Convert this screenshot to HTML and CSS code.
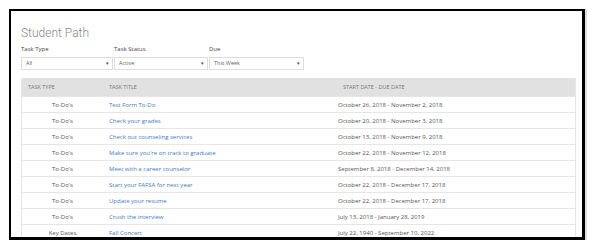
FILE: index.html
```html
<!DOCTYPE html>
<html lang="en">
  <head>
    <meta charset="UTF-8" />
    <title>Student Path</title>
    <link rel="stylesheet" href="styles.css">
  </head>
  <body>
    <!-- screenshot frame -->
    <div class="frame">
      <h1 class="title">Student Path</h1>

      <!-- filters -->
      <div class="filters">
        <div class="filter f1">
          <label>Task Type</label>
          <div class="select">All<span class="caret">&#9662;</span></div>
        </div>
        <div class="filter f2">
          <label>Task Status</label>
          <div class="select">Active<span class="caret">&#9662;</span></div>
        </div>
        <div class="filter f3">
          <label>Due</label>
          <div class="select">This Week<span class="caret">&#9662;</span></div>
        </div>
      </div>

      <!-- task list -->
      <table class="tasks">
        <thead>
          <tr>
            <th class="c-type">Task Type</th>
            <th class="c-title">Task Title</th>
            <th class="c-date">Start Date - Due Date</th>
          </tr>
        </thead>
        <tbody>
          <tr><td class="c-type">To-Do's</td><td class="c-title"><a href="#">Test Form To-Do</a></td><td class="c-date">October 26, 2018 - November 2, 2018</td></tr>
          <tr><td class="c-type">To-Do's</td><td class="c-title"><a href="#">Check your grades</a></td><td class="c-date">October 20, 2018 - November 3, 2018</td></tr>
          <tr><td class="c-type">To-Do's</td><td class="c-title"><a href="#">Check out counseling services</a></td><td class="c-date">October 13, 2018 - November 9, 2018</td></tr>
          <tr><td class="c-type">To-Do's</td><td class="c-title"><a href="#">Make sure you're on track to graduate</a></td><td class="c-date">October 22, 2018 - November 12, 2018</td></tr>
          <tr><td class="c-type">To-Do's</td><td class="c-title"><a href="#">Meet with a career counselor</a></td><td class="c-date">September 8, 2018 - December 14, 2018</td></tr>
          <tr><td class="c-type">To-Do's</td><td class="c-title"><a href="#">Start your FAFSA for next year</a></td><td class="c-date">October 22, 2018 - December 17, 2018</td></tr>
          <tr><td class="c-type">To-Do's</td><td class="c-title"><a href="#">Update your resume</a></td><td class="c-date">October 22, 2018 - December 17, 2018</td></tr>
          <tr><td class="c-type">To-Do's</td><td class="c-title"><a href="#">Crush the interview</a></td><td class="c-date">July 13, 2018 - January 28, 2019</td></tr>
          <tr><td class="c-type">Key Dates</td><td class="c-title"><a href="#">Fall Concert</a></td><td class="c-date">July 22, 1940 - September 10, 2022</td></tr>
        </tbody>
      </table>
    </div>
  </body>
</html>
```

FILE: styles.css
```css
body {
  margin: 0;
  padding: 0;
  background: #fff;
  font-family: "Open Sans", "Liberation Sans", sans-serif;
  color: #555;
}

/* black frame around the captured page */
.frame {
  margin: 9px 0 0 9px;
  width: 555px;
  height: 226px;
  padding: 0 6px 0 10px;
  border: 2px solid #000;
  border-right-width: 3px;
  border-bottom-width: 3px;
  box-shadow: 2px 0 0 #ddd;
  overflow: hidden;
}

.title {
  margin: 15px 0 0;
  font-family: Roboto, "Liberation Sans", sans-serif;
  font-weight: 300;
  font-size: 12px;
  line-height: 15px;
  color: #888;
}

/* filters */
.filters {
  display: flex;
  margin-top: 4px;
}

.filter label {
  display: block;
  font-size: 6px;
  line-height: 9px;
  color: #444;
  margin-bottom: 3px;
}

.f1 { width: 93px; }
.f2 { width: 95px; }
.f3 { width: 95px; }

.select {
  position: relative;
  height: 11px;
  line-height: 11px;
  border: 1px solid #ddd;
  padding-left: 4px;
  font-size: 5.5px;
  color: #666;
}

.f1 .select,
.f2 .select { margin-right: 1px; }

.caret {
  position: absolute;
  right: 3px;
  top: 0;
  font-size: 5px;
  color: #444;
}

/* table */
.tasks {
  width: 555px;
  margin-top: 8px;
  border-collapse: collapse;
  border: 1px solid #e6e6e6;
  border-top: none;
  table-layout: fixed;
  font-size: 6px;
}

.tasks th {
  background: #e1e1e1;
  height: 18px;
  padding: 0 0 0 6px;
  text-align: left;
  font-weight: 400;
  font-size: 5.5px;
  text-transform: uppercase;
  color: #777;
}

.tasks td {
  height: 15px;
  padding: 0 0 0 6px;
  border-top: 1px solid #e6e6e6;
  color: #555;
  white-space: nowrap;
}

.tasks .c-type { width: 75px; }
.tasks .c-title { width: 223px; }

.tasks td.c-type {
  text-align: center;
  padding-left: 0;
}

.tasks th.c-date { padding-left: 11px; }

.tasks a {
  color: #3d7bc9;
  text-decoration: none;
}
```
